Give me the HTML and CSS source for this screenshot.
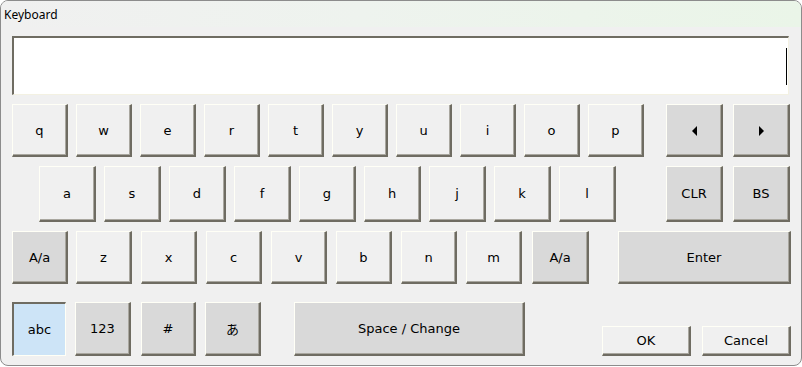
FILE: index.html
```html
<!DOCTYPE html>
<html lang="en">
<head>
    <meta charset="UTF-8">
    <title>Keyboard</title>
    <link rel="stylesheet" href="styles.css">
</head>
<body>
    <div class="window">
        <div class="titlebar">Keyboard</div>

        <div class="content">
            <!-- input display -->
            <div class="display"><span class="caret"></span></div>

            <!-- row 1 -->
            <div class="row row-1">
                <button class="key">q</button>
                <button class="key">w</button>
                <button class="key">e</button>
                <button class="key">r</button>
                <button class="key">t</button>
                <button class="key">y</button>
                <button class="key">u</button>
                <button class="key">i</button>
                <button class="key">o</button>
                <button class="key">p</button>
                <button class="key fn arrow first-fn"><span class="tri tri-left"></span></button>
                <button class="key fn arrow"><span class="tri tri-right"></span></button>
            </div>

            <!-- row 2 -->
            <div class="row row-2">
                <button class="key">a</button>
                <button class="key">s</button>
                <button class="key">d</button>
                <button class="key">f</button>
                <button class="key">g</button>
                <button class="key">h</button>
                <button class="key">j</button>
                <button class="key">k</button>
                <button class="key">l</button>
                <button class="key fn clr">CLR</button>
                <button class="key fn">BS</button>
            </div>

            <!-- row 3 -->
            <div class="row row-3">
                <button class="key fn shift">A/a</button>
                <button class="key letter first-letter">z</button>
                <button class="key letter">x</button>
                <button class="key letter">c</button>
                <button class="key letter">v</button>
                <button class="key letter">b</button>
                <button class="key letter">n</button>
                <button class="key letter">m</button>
                <button class="key fn shift2">A/a</button>
                <button class="key fn enter">Enter</button>
            </div>

            <!-- row 4 -->
            <div class="row row-4">
                <button class="key mode active">abc</button>
                <button class="key fn mode">123</button>
                <button class="key fn mode sym">#</button>
                <button class="key fn mode kana">あ</button>
                <button class="key fn space">Space / Change</button>
                <button class="key dialog ok">OK</button>
                <button class="key dialog cancel">Cancel</button>
            </div>
        </div>
    </div>
</body>
</html>
```

FILE: styles.css
```css
:root {
    --window-bg: #f0f0f0;
    --key-bg: #f0f0f0;
    --fn-bg: #d9d9d9;
    --active-bg: #cde4f7;
    --hi: #fffff6;
    --shadow: #6f6c62;
    --shadow-soft: #a9a79f;
    --ui-font: "DejaVu Sans", Verdana, "Noto Sans CJK JP", sans-serif;
}

html, body {
    margin: 0;
    background: #ffffff;
}

body {
    width: 802px;
    height: 367px;
    overflow: hidden;
}

/* Window frame */
.window {
    box-sizing: border-box;
    width: 802px;
    height: 366px;
    border: 1px solid #8c8c8c;
    border-radius: 8px;
    background: var(--window-bg);
    overflow: hidden;
    display: flex;
    flex-direction: column;
}

.titlebar {
    height: 26px;
    flex: none;
    padding-left: 3px;
    line-height: 27px;
    font-family: "Noto Sans", "Open Sans", sans-serif;
    font-size: 12px;
    color: #000;
    background: linear-gradient(to right, #f0f0f0 0%, #eef3ee 45%, #eaf5e8 100%);
}

.content {
    padding: 9px 0 0 11px;
}

/* Text display */
.display {
    box-sizing: border-box;
    width: 777px;
    height: 59px;
    background: #fff;
    border-top: 2px solid var(--shadow);
    border-left: 2px solid var(--shadow);
    border-right: 1px solid #f3f1e2;
    border-bottom: 1px solid #f3f1e2;
    display: flex;
    justify-content: flex-end;
    align-items: center;
    padding-right: 1px;
}
.caret {
    width: 1px;
    height: 37px;
    background: #000;
    margin-top: 1px;
}

/* Rows */
.row {
    display: flex;
    gap: 8px;
}
.row-1 { margin-top: 9px; }
.row-2 { margin-top: 9px; padding-left: 27px; }
.row-3 { margin-top: 9px; }
.row-4 { margin-top: 18px; align-items: flex-end; }

/* Keys */
.key {
    box-sizing: border-box;
    width: 56px;
    height: 53px;
    padding: 0;
    margin: 0;
    background: var(--key-bg);
    border-style: solid;
    border-width: 1px 2px 2px 1px;
    border-color: var(--hi) var(--shadow) var(--shadow) var(--hi);
    box-shadow: inset -1px -1px 0 var(--shadow-soft);
    font-family: var(--ui-font);
    font-size: 13px;
    color: #000;
    display: flex;
    align-items: center;
    justify-content: center;
}
.key.fn {
    background: var(--fn-bg);
}

.row-1 .key.fn { width: 57px; }
.row-1 .first-fn { margin-left: 14px; }
.row-1 .key.arrow + .key.arrow { margin-left: 2px; }

.row-2 .key { width: 57px; height: 56px; }
.row-2 .key.clr { margin-left: 42px; }
.row-2 .key.clr + .key { margin-left: 2px; }

.row-3 .key.letter { margin-left: 1px; }
.row-3 .key.first-letter { margin-left: 0; }
.row-3 .key.shift2 { width: 57px; margin-left: 2px; }
.row-3 .key.enter { width: 173px; margin-left: 21px; }

.row-4 .key { height: 54px; }
.row-4 .key.active {
    width: 54px;
    margin-right: 1px;
    background: var(--active-bg);
    border-width: 2px 1px 1px 2px;
    border-color: var(--shadow) var(--hi) var(--hi) var(--shadow);
    box-shadow: none;
}
.row-4 .key.sym { width: 55px; margin-left: 2px; }
.row-4 .key.kana { margin-left: 1px; }
.row-4 .key.space { width: 231px; margin-left: 25px; }
.row-4 .key.dialog {
    width: 89px;
    height: 30px;
    background: var(--key-bg);
}
.row-4 .key.ok { margin-left: 69px; }
.row-4 .key.cancel { margin-left: 3px; }

/* Arrow glyphs */
.tri {
    width: 0;
    height: 0;
    border-top: 5px solid transparent;
    border-bottom: 5px solid transparent;
    margin-top: 1px;
}
.tri-left { border-right: 5px solid #000; }
.tri-right { border-left: 5px solid #000; }
```
